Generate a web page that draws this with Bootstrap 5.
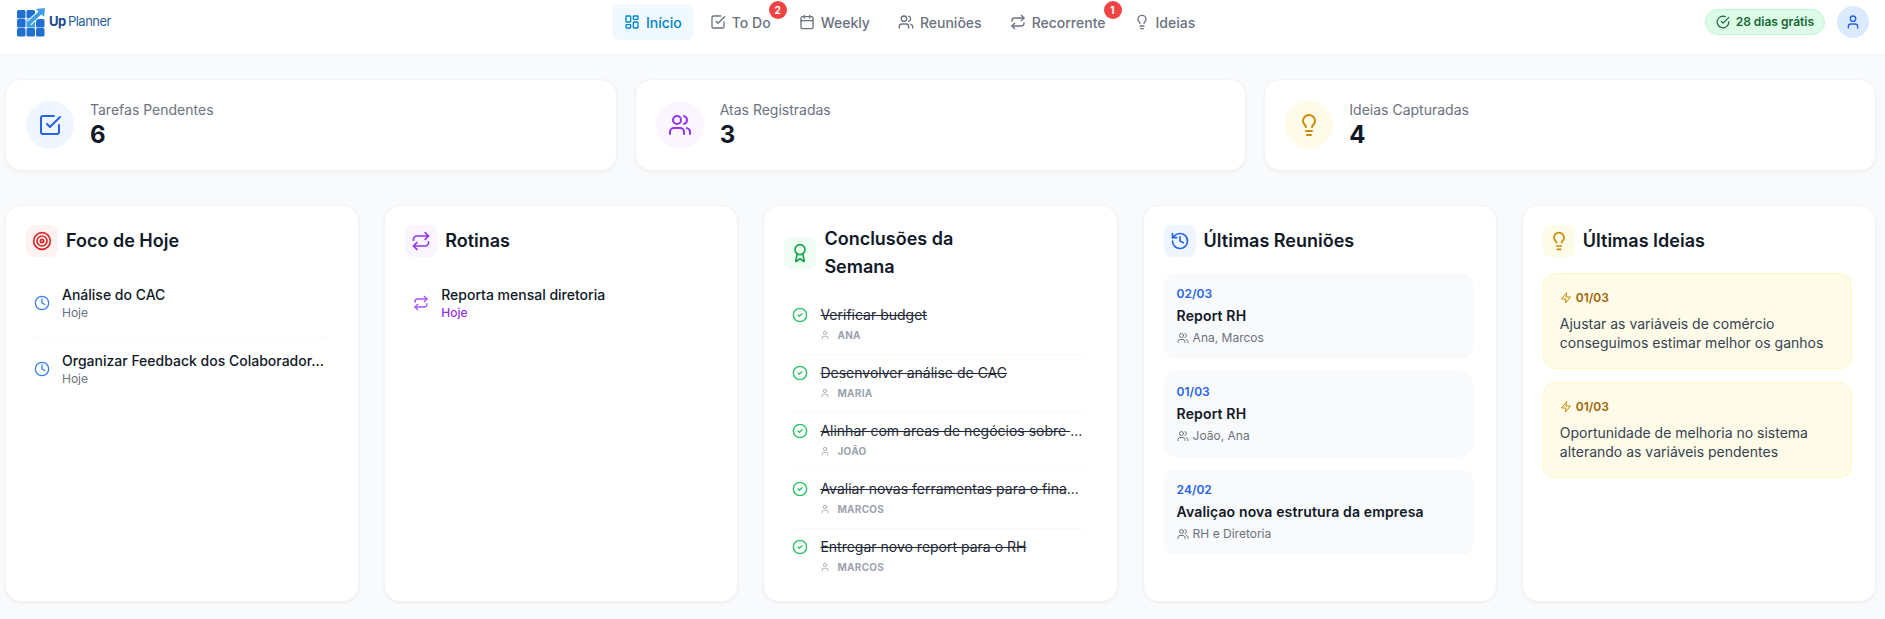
<!DOCTYPE html>
<html lang="pt-BR">
<head>
    <meta charset="UTF-8">
    <meta name="viewport" content="width=device-width, initial-scale=1.0">
    <title>Up Planner</title>
    <link href="https://cdn.jsdelivr.net/npm/bootstrap@5.3.2/dist/css/bootstrap.min.css" rel="stylesheet">
    <style>
        body { font-family: Inter, "Liberation Sans", sans-serif; background: #f9fafb; color: #111827; height: 619px; overflow: hidden; }
        .ico { fill: none; stroke: currentColor; stroke-width: 2; stroke-linecap: round; stroke-linejoin: round; flex-shrink: 0; }

        /* top bar */
        .topbar { height: 55px; background: #fff; border-bottom: 1px solid #f3f4f6; padding: 0 16px 10px 17px; }
        .brand-box { width: 595px; gap: 3px; }
        .brand-name { font-size: 13px; color: #2a6099; letter-spacing: -.5px; word-spacing: -1px; }
        .brand-name b { color: #174a8c; font-weight: 700; }
        .top-nav { gap: 4px; margin-right: auto; }
        .top-link { height: 36px; padding: 0 12px; gap: 6px; font-size: 14px; font-weight: 500; color: #6b7280; border-radius: 8px; text-decoration: none; position: relative; }
        .top-link.active { background: #f0f9ff; color: #0284c7; }
        .count-dot { position: absolute; top: -3px; right: -4px; width: 18px; height: 18px; background: #ef4444; color: #fff; font-size: 10px; font-weight: 700; border-radius: 50%; }
        .right-box { gap: 12px; }
        .trial-pill { height: 26px; padding: 0 10px; gap: 6px; font-size: 12px; font-weight: 600; color: #166534; background: #dcfce7; border: 1px solid #bbf7d0; border-radius: 13px; }
        .avatar-dot { width: 32px; height: 32px; background: #dbeafe; color: #2563eb; border-radius: 50%; }

        /* page */
        .page-wrap { padding: 24px 9px 16px 5px; }
        .panel { background: #fff; border: 1px solid #f3f4f6; border-radius: 16px; box-shadow: 0 1px 3px rgba(0,0,0,.06); }
        .stat-row { gap: 18px; margin-bottom: 34px; }
        .stat-panel { flex: 1 1 0; height: 92px; padding: 0 20px; gap: 16px; }
        .stat-icon { width: 48px; height: 48px; border-radius: 50%; }
        .stat-label { font-size: 14px; line-height: 20px; color: #6b7280; }
        .stat-value { font-size: 24px; line-height: 30px; font-weight: 700; color: #111827; }
        .col-row { gap: 25px; height: 397px; }
        .col-panel { flex: 1 1 0; min-width: 0; padding: 19px 23px 19px 20px; }
        .col-head { gap: 8px; margin-bottom: 16px; min-height: 32px; }
        .col-icon { width: 32px; height: 32px; border-radius: 8px; }
        .col-title { font-size: 18px; line-height: 28px; font-weight: 600; color: #111827; margin: 0; }

        .bg-red { background: #fef2f2; color: #dc2626; }
        .bg-purple { background: #faf5ff; color: #9333ea; }
        .bg-green { background: #f0fdf4; color: #16a34a; }
        .bg-blue { background: #eff6ff; color: #2563eb; }
        .bg-yellow { background: #fefce8; color: #ca8a04; }

        /* task rows */
        .task-row { padding: 8px 8px 12px; gap: 12px; border-bottom: 1px solid #f9fafb; border-radius: 12px; height: 65px; }
        .task-row:last-child { border-bottom: 0; }
        .task-row.routine-row { border-bottom: 1px solid #fff; }
        .task-name { font-size: 14px; line-height: 20px; font-weight: 500; color: #111827; white-space: nowrap; }
        .task-when { font-size: 12px; line-height: 16px; color: #6b7280; }
        .task-when.routine { color: #9333ea; font-weight: 500; }
        .clock-blue { color: #3b82f6; }
        .repeat-purple { color: #a855f7; }

        /* finished rows */
        .done-list { margin-top: 9px; }
        .done-row { height: 58px; padding: 0 10px 0 8px; gap: 12px; border-bottom: 1px solid #f9fafb; border-radius: 12px; }
        .done-row:last-child { border-bottom: 0; }
        .done-check { color: #22c55e; margin-top: 10px; }
        .done-name { font-size: 14px; line-height: 20px; color: #1f2937; white-space: pre; margin-top: 8px; }
        .done-owner { font-size: 10px; line-height: 16px; font-weight: 700; color: #9ca3af; text-transform: uppercase; letter-spacing: .3px; gap: 7px; margin-top: 2px; }

        /* meetings and ideas */
        .meet-item { background: #f9fafb; border-radius: 12px; padding: 13px 13px; height: 86px; margin-bottom: 12px; }
        .meet-date { font-size: 12px; line-height: 16px; font-weight: 600; color: #2563eb; }
        .meet-name { font-size: 14px; line-height: 20px; font-weight: 600; color: #111827; margin-top: 4px; letter-spacing: .14px; }
        .meet-people { font-size: 12px; line-height: 16px; color: #6b7280; gap: 4px; margin-top: 4px; }
        .idea-item { background: #fefce8; border: 1px solid #fef9c3; border-radius: 12px; padding: 16px; height: 96px; margin-bottom: 13px; }
        .idea-date { font-size: 12px; line-height: 16px; font-weight: 600; color: #a16207; gap: 4px; }
        .idea-date .ico { color: #ca8a04; }
        .idea-text { font-size: 14px; line-height: 19.25px; color: #374151; margin-top: 8px; }
    </style>
</head>
<body>
    <svg width="0" height="0" class="d-none">
        <symbol id="i-dash" viewBox="0 0 24 24"><rect x="3" y="3" width="7" height="9" rx="1"/><rect x="14" y="3" width="7" height="5" rx="1"/><rect x="14" y="12" width="7" height="9" rx="1"/><rect x="3" y="16" width="7" height="5" rx="1"/></symbol>
        <symbol id="i-check" viewBox="0 0 24 24"><path d="M21 12v7a2 2 0 0 1-2 2H5a2 2 0 0 1-2-2V5a2 2 0 0 1 2-2h11"/><path d="m9 11 3 3L22 4"/></symbol>
        <symbol id="i-cal" viewBox="0 0 24 24"><rect x="3" y="4" width="18" height="18" rx="2"/><path d="M16 2v4M8 2v4M3 10h18"/></symbol>
        <symbol id="i-users" viewBox="0 0 24 24"><path d="M16 21v-2a4 4 0 0 0-4-4H6a4 4 0 0 0-4 4v2"/><circle cx="9" cy="7" r="4"/><path d="M22 21v-2a4 4 0 0 0-3-3.87"/><path d="M16 3.13a4 4 0 0 1 0 7.75"/></symbol>
        <symbol id="i-repeat" viewBox="0 0 24 24"><path d="m17 2 4 4-4 4"/><path d="M3 11v-1a4 4 0 0 1 4-4h14"/><path d="m7 22-4-4 4-4"/><path d="M21 13v1a4 4 0 0 1-4 4H3"/></symbol>
        <symbol id="i-bulb" viewBox="0 0 24 24"><path d="M15 14c.2-1 .7-1.7 1.5-2.5 1-.9 1.5-2.2 1.5-3.5A6 6 0 0 0 6 8c0 1 .2 2.2 1.5 3.5.7.7 1.3 1.5 1.5 2.5"/><path d="M9 18h6"/><path d="M10 22h4"/></symbol>
        <symbol id="i-badge" viewBox="0 0 24 24"><path d="M22 11.08V12a10 10 0 1 1-5.93-9.14"/><path d="m9 11 3 3L22 4"/></symbol>
        <symbol id="i-user" viewBox="0 0 24 24"><path d="M19 21v-2a4 4 0 0 0-4-4H9a4 4 0 0 0-4 4v2"/><circle cx="12" cy="7" r="4"/></symbol>
        <symbol id="i-target" viewBox="0 0 24 24"><circle cx="12" cy="12" r="10"/><circle cx="12" cy="12" r="6"/><circle cx="12" cy="12" r="2"/></symbol>
        <symbol id="i-clock" viewBox="0 0 24 24"><circle cx="12" cy="12" r="10"/><path d="M12 6v6l4 2"/></symbol>
        <symbol id="i-award" viewBox="0 0 24 24"><path d="m15.477 12.89 1.515 8.526a.5.5 0 0 1-.81.47l-3.58-2.687a1 1 0 0 0-1.197 0l-3.586 2.686a.5.5 0 0 1-.81-.469l1.514-8.526"/><circle cx="12" cy="8" r="6"/></symbol>
        <symbol id="i-history" viewBox="0 0 24 24"><path d="M3 12a9 9 0 1 0 9-9 9.75 9.75 0 0 0-6.74 2.74L3 8"/><path d="M3 3v5h5"/><path d="M12 7v5l4 2"/></symbol>
        <symbol id="i-done" viewBox="0 0 24 24"><circle cx="12" cy="12" r="10"/><path d="m9 12 2 2 4-4"/></symbol>
        <symbol id="i-zap" viewBox="0 0 24 24"><path d="M13 2 3 14h9l-1 8 10-12h-9l1-8z"/></symbol>
    </svg>

    <!-- Top bar -->
    <header class="topbar d-flex align-items-center">
        <div class="brand-box d-flex align-items-center">
            <svg width="29" height="29" viewBox="0 0 29 29">
                <g fill="#1f6fd0">
                    <rect x="0" y="2" width="8.5" height="8.5" rx="1.5"/><rect x="9.5" y="2" width="8.5" height="8.5" rx="1.5"/>
                    <rect x="0" y="11" width="8.5" height="8.5" rx="1.5"/><rect x="19" y="11" width="8.5" height="8.5" rx="1.5"/>
                    <rect x="0" y="20" width="8.5" height="8.5" rx="1.5"/><rect x="9.5" y="20" width="8.5" height="8.5" rx="1.5"/><rect x="19" y="20" width="8.5" height="8.5" rx="1.5"/>
                </g>
                <path d="M9.5 11 H18 V19.5 H9.5 Z" fill="#3d9eea"/>
                <path d="M12 15 L24 4" stroke="#fff" stroke-width="6" fill="none"/>
                <path d="M11 16 L24 4" stroke="#3d9eea" stroke-width="4" fill="none"/>
                <path d="M19 1 L28 0 L27 9 Z" fill="#3d9eea"/>
            </svg>
            <span class="brand-name"><b>Up</b> Planner</span>
        </div>
        <nav class="top-nav d-flex">
            <a class="top-link active d-flex align-items-center" href="#"><svg class="ico" width="16" height="16"><use href="#i-dash"/></svg>Início</a>
            <a class="top-link d-flex align-items-center" href="#"><svg class="ico" width="16" height="16"><use href="#i-check"/></svg>To Do<span class="count-dot d-flex align-items-center justify-content-center">2</span></a>
            <a class="top-link d-flex align-items-center" href="#"><svg class="ico" width="16" height="16"><use href="#i-cal"/></svg>Weekly</a>
            <a class="top-link d-flex align-items-center" href="#"><svg class="ico" width="16" height="16"><use href="#i-users"/></svg>Reuniões</a>
            <a class="top-link d-flex align-items-center" href="#"><svg class="ico" width="16" height="16"><use href="#i-repeat"/></svg>Recorrente<span class="count-dot d-flex align-items-center justify-content-center">1</span></a>
            <a class="top-link d-flex align-items-center" href="#"><svg class="ico" width="16" height="16"><use href="#i-bulb"/></svg>Ideias</a>
        </nav>
        <div class="right-box d-flex align-items-center">
            <div class="trial-pill d-flex align-items-center"><svg class="ico" width="14" height="14"><use href="#i-badge"/></svg>28 dias grátis</div>
            <div class="avatar-dot d-flex align-items-center justify-content-center"><svg class="ico" width="16" height="16"><use href="#i-user"/></svg></div>
        </div>
    </header>

    <main class="page-wrap">
        <!-- Counters -->
        <section class="stat-row d-flex">
            <div class="panel stat-panel d-flex align-items-center">
                <div class="stat-icon bg-blue d-flex align-items-center justify-content-center"><svg class="ico" width="24" height="24"><use href="#i-check"/></svg></div>
                <div><div class="stat-label">Tarefas Pendentes</div><div class="stat-value">6</div></div>
            </div>
            <div class="panel stat-panel d-flex align-items-center">
                <div class="stat-icon bg-purple d-flex align-items-center justify-content-center"><svg class="ico" width="24" height="24"><use href="#i-users"/></svg></div>
                <div><div class="stat-label">Atas Registradas</div><div class="stat-value">3</div></div>
            </div>
            <div class="panel stat-panel d-flex align-items-center">
                <div class="stat-icon bg-yellow d-flex align-items-center justify-content-center"><svg class="ico" width="24" height="24"><use href="#i-bulb"/></svg></div>
                <div><div class="stat-label">Ideias Capturadas</div><div class="stat-value">4</div></div>
            </div>
        </section>

        <!-- Columns -->
        <section class="col-row d-flex">
            <div class="panel col-panel">
                <div class="col-head d-flex align-items-center">
                    <div class="col-icon bg-red d-flex align-items-center justify-content-center"><svg class="ico" width="20" height="20"><use href="#i-target"/></svg></div>
                    <h2 class="col-title">Foco de Hoje</h2>
                </div>
                <div class="task-row d-flex align-items-center">
                    <svg class="ico clock-blue" width="16" height="16"><use href="#i-clock"/></svg>
                    <div><div class="task-name">Análise do CAC</div><div class="task-when">Hoje</div></div>
                </div>
                <div class="task-row d-flex align-items-center">
                    <svg class="ico clock-blue" width="16" height="16"><use href="#i-clock"/></svg>
                    <div><div class="task-name">Organizar Feedback dos Colaborador...</div><div class="task-when">Hoje</div></div>
                </div>
            </div>

            <div class="panel col-panel">
                <div class="col-head d-flex align-items-center">
                    <div class="col-icon bg-purple d-flex align-items-center justify-content-center"><svg class="ico" width="20" height="20"><use href="#i-repeat"/></svg></div>
                    <h2 class="col-title">Rotinas</h2>
                </div>
                <div class="task-row routine-row d-flex align-items-center">
                    <svg class="ico repeat-purple" width="16" height="16"><use href="#i-repeat"/></svg>
                    <div><div class="task-name">Reporta mensal diretoria</div><div class="task-when routine">Hoje</div></div>
                </div>
            </div>

            <div class="panel col-panel">
                <div class="col-head d-flex align-items-center">
                    <div class="col-icon bg-green d-flex align-items-center justify-content-center"><svg class="ico" width="20" height="20"><use href="#i-award"/></svg></div>
                    <h2 class="col-title">Conclusões da<br>Semana</h2>
                </div>
                <div class="done-list">
                    <div class="done-row d-flex">
                        <svg class="ico done-check" width="16" height="16"><use href="#i-done"/></svg>
                        <div><div class="done-name"><s>Verificar budget</s></div><div class="done-owner d-flex align-items-center"><svg class="ico" width="10" height="12" viewBox="0 0 24 24"><use href="#i-user"/></svg>Ana</div></div>
                    </div>
                    <div class="done-row d-flex">
                        <svg class="ico done-check" width="16" height="16"><use href="#i-done"/></svg>
                        <div><div class="done-name"><s>Desenvolver análise de CAC</s></div><div class="done-owner d-flex align-items-center"><svg class="ico" width="10" height="12" viewBox="0 0 24 24"><use href="#i-user"/></svg>Maria</div></div>
                    </div>
                    <div class="done-row d-flex">
                        <svg class="ico done-check" width="16" height="16"><use href="#i-done"/></svg>
                        <div><div class="done-name"><s>Alinhar com areas de negócios sobre </s>...</div><div class="done-owner d-flex align-items-center"><svg class="ico" width="10" height="12" viewBox="0 0 24 24"><use href="#i-user"/></svg>João</div></div>
                    </div>
                    <div class="done-row d-flex">
                        <svg class="ico done-check" width="16" height="16"><use href="#i-done"/></svg>
                        <div><div class="done-name"><s>Avaliar novas ferramentas para o fina</s>...</div><div class="done-owner d-flex align-items-center"><svg class="ico" width="10" height="12" viewBox="0 0 24 24"><use href="#i-user"/></svg>Marcos</div></div>
                    </div>
                    <div class="done-row d-flex">
                        <svg class="ico done-check" width="16" height="16"><use href="#i-done"/></svg>
                        <div><div class="done-name"><s>Entregar novo report para o RH</s></div><div class="done-owner d-flex align-items-center"><svg class="ico" width="10" height="12" viewBox="0 0 24 24"><use href="#i-user"/></svg>Marcos</div></div>
                    </div>
                </div>
            </div>

            <div class="panel col-panel">
                <div class="col-head d-flex align-items-center">
                    <div class="col-icon bg-blue d-flex align-items-center justify-content-center"><svg class="ico" width="20" height="20"><use href="#i-history"/></svg></div>
                    <h2 class="col-title">Últimas Reuniões</h2>
                </div>
                <div class="meet-item">
                    <div class="meet-date">02/03</div>
                    <div class="meet-name">Report RH</div>
                    <div class="meet-people d-flex align-items-center"><svg class="ico" width="12" height="12"><use href="#i-users"/></svg>Ana, Marcos</div>
                </div>
                <div class="meet-item">
                    <div class="meet-date">01/03</div>
                    <div class="meet-name">Report RH</div>
                    <div class="meet-people d-flex align-items-center"><svg class="ico" width="12" height="12"><use href="#i-users"/></svg>João, Ana</div>
                </div>
                <div class="meet-item">
                    <div class="meet-date">24/02</div>
                    <div class="meet-name">Avaliçao nova estrutura da empresa</div>
                    <div class="meet-people d-flex align-items-center"><svg class="ico" width="12" height="12"><use href="#i-users"/></svg>RH e Diretoria</div>
                </div>
            </div>

            <div class="panel col-panel">
                <div class="col-head d-flex align-items-center">
                    <div class="col-icon bg-yellow d-flex align-items-center justify-content-center"><svg class="ico" width="20" height="20"><use href="#i-bulb"/></svg></div>
                    <h2 class="col-title">Últimas Ideias</h2>
                </div>
                <div class="idea-item">
                    <div class="idea-date d-flex align-items-center"><svg class="ico" width="12" height="12"><use href="#i-zap"/></svg>01/03</div>
                    <div class="idea-text">Ajustar as variáveis de comércio conseguimos estimar melhor os ganhos</div>
                </div>
                <div class="idea-item">
                    <div class="idea-date d-flex align-items-center"><svg class="ico" width="12" height="12"><use href="#i-zap"/></svg>01/03</div>
                    <div class="idea-text">Oportunidade de melhoria no sistema alterando as variáveis pendentes</div>
                </div>
            </div>
        </section>
    </main>

    <script src="https://cdn.jsdelivr.net/npm/bootstrap@5.3.2/dist/js/bootstrap.bundle.min.js"></script>
</body>
</html>
